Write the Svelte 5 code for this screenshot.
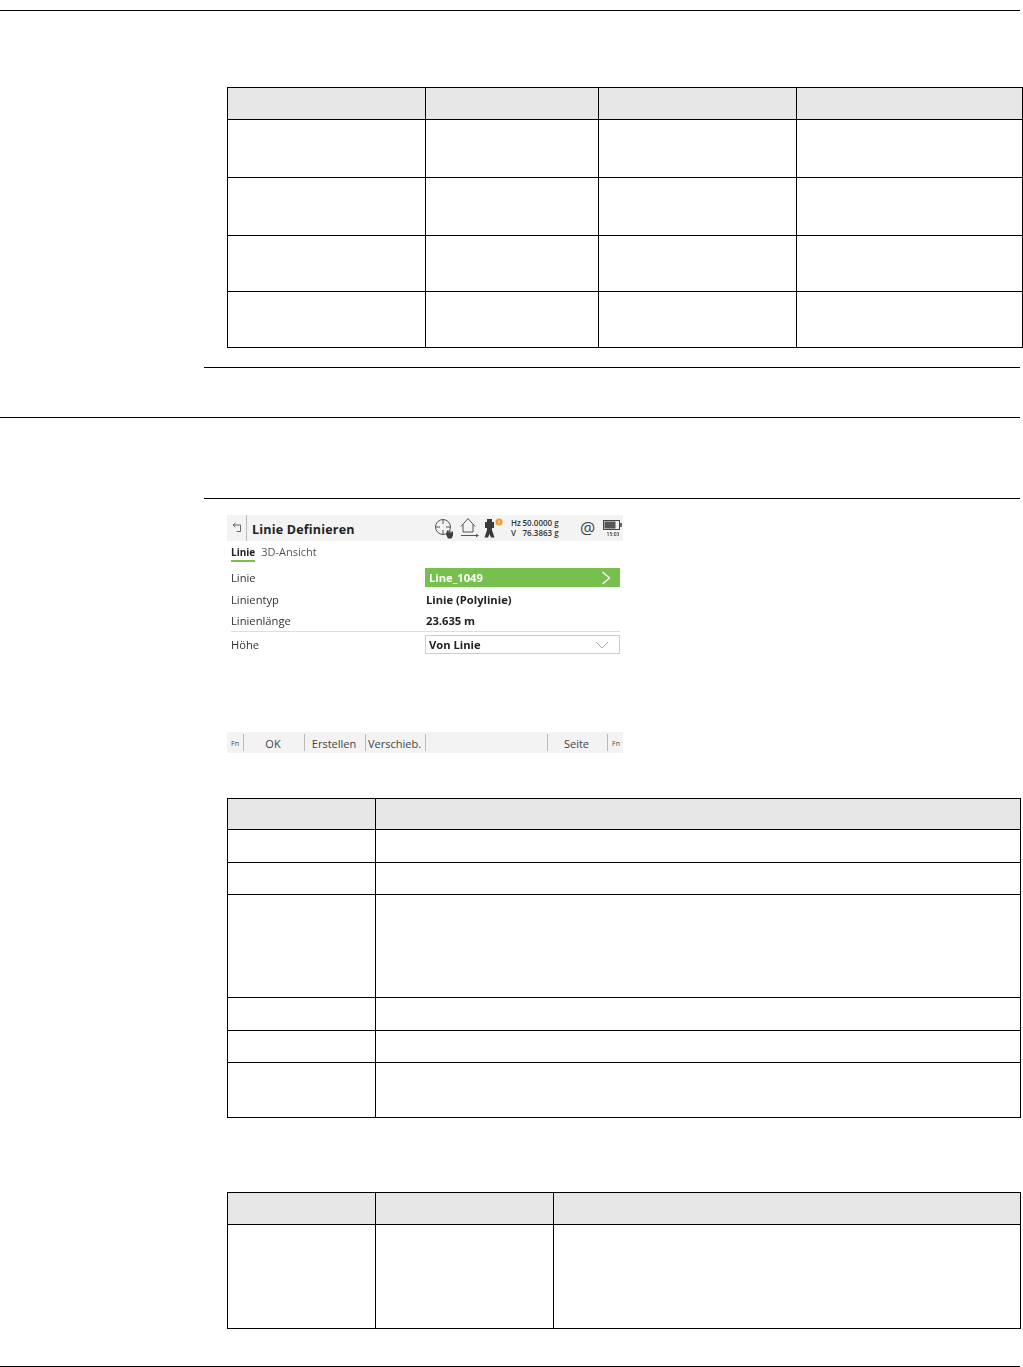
<script>
  const softkeys = [
    { label: "Fn", cls: "fn" },
    { label: "OK", cls: "k61" },
    { label: "Erstellen", cls: "k61" },
    { label: "Verschieb.", cls: "k60" },
    { label: "", cls: "k122" },
    { label: "Seite", cls: "k60" },
    { label: "Fn", cls: "fn" },
  ];
  const paramRows = [1, 2, 3, 4];
  const descRows = ["r33", "r32", "r103", "r33", "r32", "r55"];
</script>

<div class="page">
  <hr class="rule first" />

  <div class="indent t1-wrap">
    <table class="t1">
      <thead>
        <tr><th></th><th></th><th></th><th></th></tr>
      </thead>
      <tbody>
        {#each paramRows as n}
          <tr class={n > 2 ? "short" : ""}><td></td><td></td><td></td><td></td></tr>
        {/each}
      </tbody>
    </table>
  </div>

  <hr class="rule sub after-t1" />
  <hr class="rule sec" />
  <hr class="rule sub before-screen" />

  <div class="indent">
    <div class="screen">
      <div class="titlebar">
        <svg class="back" width="12" height="12" viewBox="0 0 12 12" fill="none" stroke="#666" stroke-width="1">
          <path d="M2 3H9.500V9.500H5.500" />
          <path d="M4.500 1L2 3L4.500 5" />
        </svg>
        <span class="title">Linie Definieren</span>
        <svg class="icons" width="90" height="24" viewBox="0 0 90 24" fill="none">
          <!-- target with hand -->
          <circle cx="9" cy="10" r="7.500" stroke="#555" />
          <path d="M9 2.500V7M9 13V17.500M1.500 10H6M12 10H16.500" stroke="#555" />
          <path d="M13 13.500h1.500v2h1v-2h1v2h1v-1h1.500v4l-1.500 3h-3.500l-2-4z" fill="#3f3f3f" />
          <!-- home with base line -->
          <path d="M27 9.500L34 1.500L41 9.500M29 7.500V15H39V7.500" stroke="#555" />
          <path d="M27 18.500H43" stroke="#555" />
          <path d="M45 18.500l-3-1.800v3.600z" fill="#555" />
          <!-- total station -->
          <path d="M53 2h5v11h-5zM51 5h2v6h-2zM58 5h2v6h-2z" fill="#3a3a3a" />
          <path d="M53 13h5L60.500 20.500h-3.500L55.500 17L54 20.500h-3.500z" fill="#3a3a3a" />
          <circle cx="65" cy="5" r="3.500" fill="#ef9a2c" />
          <path d="M65 3.200V6.800" stroke="#fff" stroke-width="0.800" />
        </svg>
        <div class="angles">
          <div><span class="ak">Hz</span>50.0000 g</div>
          <div><span class="ak">V</span>76.3863 g</div>
        </div>
        <span class="at">@</span>
        <div class="batt">
          <svg width="20" height="11" viewBox="0 0 20 11">
            <rect x="0.500" y="0.500" width="16" height="9" fill="#eee" stroke="#444" />
            <rect x="1.500" y="1.500" width="11" height="7" fill="#555" />
            <rect x="17" y="3" width="2" height="4" fill="#666" />
          </svg>
          <span>15:03</span>
        </div>
      </div>

      <div class="tabs">
        <span class="tab active">Linie</span>
        <span class="tab">3D-Ansicht</span>
      </div>

      <div class="row green-row">
        <span class="lbl">Linie</span>
        <div class="green">
          <span>Line_1049</span>
          <svg width="10" height="14" viewBox="0 0 10 14" fill="none" stroke="#fff" stroke-width="1.300">
            <path d="M1.500 1L8.500 7L1.500 13" />
          </svg>
        </div>
      </div>
      <div class="row plain">
        <span class="lbl">Linientyp</span>
        <b>Linie (Polylinie)</b>
      </div>
      <div class="row plain last">
        <span class="lbl">Linienlänge</span>
        <b>23.635 m</b>
      </div>
      <div class="row select-row">
        <span class="lbl">Höhe</span>
        <div class="select">
          <b>Von Linie</b>
          <svg width="14" height="8" viewBox="0 0 14 8" fill="none" stroke="#aaa">
            <path d="M1 1L7 7L13 1" />
          </svg>
        </div>
      </div>

      <div class="softkeys">
        {#each softkeys as key}
          <span class="key {key.cls}">{key.label}</span>
        {/each}
      </div>
    </div>

    <table class="t2">
      <thead>
        <tr><th class="c148"></th><th></th></tr>
      </thead>
      <tbody>
        {#each descRows as cls}
          <tr class={cls}><td class="c148"></td><td></td></tr>
        {/each}
      </tbody>
    </table>

    <table class="t3">
      <thead>
        <tr><th class="c148"></th><th class="c178"></th><th></th></tr>
      </thead>
      <tbody>
        <tr class="r104"><td class="c148"></td><td class="c178"></td><td></td></tr>
      </tbody>
    </table>
  </div>

  <hr class="rule foot" />
</div>

<style>
  :global(body) {
    margin: 0;
    background: #fff;
  }

  .page {
    width: 1023px;
    height: 1367px;
    overflow: hidden;
    font-family: "Open Sans", "Noto Sans", sans-serif;
    color: #222;
  }

  .rule {
    border: 0;
    border-top: 1px solid #000;
    margin: 0;
    width: 1020px;
  }

  .rule.first {
    margin-top: 10px;
  }

  .rule.sub {
    width: 816px;
    margin-left: 204px;
  }

  .rule.after-t1 {
    margin-top: 19px;
  }

  .rule.sec {
    margin-top: 49px;
  }

  .rule.before-screen {
    margin-top: 80px;
  }

  .rule.foot {
    margin-top: 37px;
  }

  .indent {
    padding-left: 227px;
  }

  .t1-wrap {
    padding-top: 76px;
  }

  table {
    border-collapse: collapse;
    table-layout: fixed;
  }

  th,
  td {
    border: 1px solid #000;
    padding: 0;
  }

  th {
    background: #e6e6e6;
    height: 31px;
  }

  .t1 {
    width: 796px;
  }

  .t1 th:nth-child(1) {
    width: 197px;
  }

  .t1 th:nth-child(2) {
    width: 172px;
  }

  .t1 th:nth-child(3) {
    width: 197px;
  }

  .t1 td {
    height: 57px;
  }

  .t1 tr.short td {
    height: 55px;
  }

  .screen {
    width: 396px;
    height: 238px;
    margin-top: 16px;
    display: flex;
    flex-direction: column;
    font-size: 11.2px;
    color: #333;
    filter: blur(0.4px);
  }

  .titlebar {
    height: 26px;
    background: #f3f3f3;
    display: flex;
    align-items: center;
  }

  .back {
    margin-left: 4px;
    flex: none;
  }

  .title {
    margin-left: 3px;
    padding: 3px 0 0 5px;
    border-left: 1px solid #bbb;
    font-size: 12.5px;
    line-height: 23px;
    font-weight: 700;
    letter-spacing: 0.2px;
    color: #222;
    width: 182px;
    flex: none;
  }

  .icons {
    flex: none;
    margin-top: 2px;
  }

  .angles {
    font-size: 8px;
    line-height: 10px;
    font-weight: 600;
    color: #333;
    margin-left: -13px;
    width: 70px;
    flex: none;
  }

  .ak {
    display: inline-block;
    width: 11.500px;
  }

  .at {
    font-size: 17px;
    line-height: 24px;
    color: #444;
    width: 22px;
    margin-left: -1px;
    flex: none;
  }

  .batt {
    display: flex;
    flex-direction: column;
    align-items: center;
    font-size: 5px;
    line-height: 6px;
    font-weight: 600;
    margin-left: 1px;
  }

  .tabs {
    display: flex;
    gap: 6px;
    margin: 4px 0 0 4px;
    height: 17px;
    line-height: 14px;
    font-size: 11px;
    color: #555;
  }

  .tab.active {
    font-size: 10px;
    font-weight: 700;
    color: #222;
    height: 15px;
    border-bottom: 2px solid #78c04d;
  }

  .row {
    display: flex;
    align-items: center;
    padding-left: 4px;
  }

  .lbl {
    width: 194px;
    flex: none;
    font-size: 11.2px;
  }

  .green-row {
    height: 19px;
    margin-top: 6px;
  }

  .green {
    width: 195px;
    height: 19px;
    background: #78c04d;
    color: #fff;
    font-weight: 700;
    display: flex;
    align-items: center;
    justify-content: space-between;
    padding: 0 9px 0 4px;
    box-sizing: border-box;
  }

  .plain {
    height: 22px;
  }

  .green-row + .plain {
    margin-top: 1px;
  }

  .plain b {
    margin-left: 1px;
    color: #222;
  }

  .plain.last {
    height: 21px;
    border-bottom: 1px solid #ddd;
    margin-left: 4px;
    padding-left: 0;
    width: 389px;
  }

  .select-row {
    height: 19px;
    margin-top: 3px;
  }

  .select {
    width: 195px;
    height: 19px;
    box-sizing: border-box;
    border: 1px solid #ccc;
    display: flex;
    align-items: center;
    justify-content: space-between;
    padding: 0 10px 0 3px;
  }

  .select b {
    color: #222;
  }

  .softkeys {
    margin-top: auto;
    height: 21px;
    background: #f3f3f3;
    display: flex;
    align-items: center;
    font-size: 11px;
    color: #444;
  }

  .key {
    display: block;
    height: 17px;
    line-height: 19px;
    padding-right: 2px;
    text-align: center;
    border-right: 1px solid #bbb;
    flex: none;
    box-sizing: border-box;
  }

  .key.fn {
    width: 17px;
    padding-right: 0;
    font-size: 7px;
    color: #444;
  }

  .key.fn:last-child {
    border-right: 0;
    width: 16px;
  }

  .key.k61 {
    width: 61px;
  }

  .key.k60 {
    width: 60px;
  }

  .key.k122 {
    width: 122px;
  }

  .t2 {
    width: 794px;
    margin-top: 45px;
  }

  .t2 th {
    height: 30px;
  }

  .c148 {
    width: 147px;
  }

  .c178 {
    width: 177px;
  }

  .r33 td {
    height: 32px;
  }

  .r32 td {
    height: 31px;
  }

  .r103 td {
    height: 102px;
  }

  .r55 td {
    height: 54px;
  }

  .r104 td {
    height: 103px;
  }

  .t3 {
    width: 794px;
    margin-top: 74px;
  }
</style>
